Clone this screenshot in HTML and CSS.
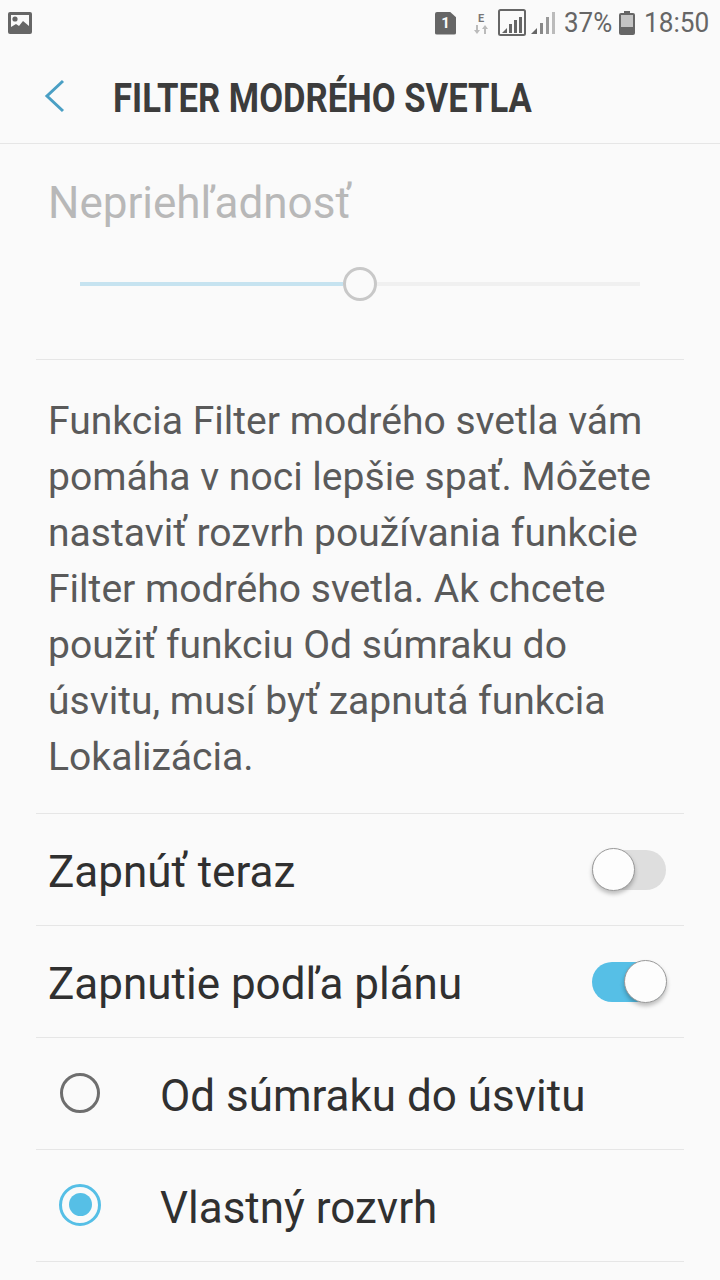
FILE: index.html
```html
<!DOCTYPE html>
<html lang="sk">
<head>
<meta charset="utf-8">
<title>Filter modrého svetla</title>
<link rel="stylesheet" href="styles.css">
</head>
<body>
<div class="status">
  <svg class="ic-pic" width="24" height="22" viewBox="0 0 24 22"><rect x="0" y="0" width="24" height="22" rx="2" fill="#666"/><rect x="3" y="3" width="18" height="13" fill="#fafafa"/><circle cx="7" cy="7" r="2.6" fill="#666"/><path d="M3 17 L3 15 L8 12 L11 14 L15 9 L21 14 L21 17 Z" fill="#666"/></svg>
  <div class="status-right">
    <div class="sim">1</div>
    <div class="edge"><span class="edge-e">E</span><svg width="14" height="9" viewBox="0 0 14 9"><path d="M3 9 L0 5 L2 5 L2 0 L4 0 L4 5 L6 5 Z M11 0 L14 4 L12 4 L12 9 L10 9 L10 4 L8 4 Z" fill="#bbb"/></svg></div>
    <svg class="sig1" width="28" height="28" viewBox="0 0 28 28"><rect x="1" y="1" width="26" height="25" rx="1.5" fill="none" stroke="#666" stroke-width="2"/><path d="M4 24 L9 24 L9 19 Z" fill="#666"/><rect x="11" y="15" width="3" height="9" fill="#666"/><rect x="16" y="11" width="3" height="13" fill="#666"/><rect x="21" y="8" width="3" height="16" fill="#666"/></svg>
    <svg class="sig2" width="24" height="26" viewBox="0 0 24 26"><path d="M0 24 L6 24 L6 18 Z" fill="#666"/><rect x="9" y="13" width="3" height="11" fill="#888"/><rect x="15" y="7" width="3" height="17" fill="#999"/><rect x="21" y="2" width="3" height="22" fill="#bbb"/></svg>
    <span class="pct">37%</span>
    <svg class="batt" width="16" height="24" viewBox="0 0 16 24"><rect x="5" y="0" width="6" height="3" fill="#666"/><rect x="0" y="2" width="16" height="22" rx="2" fill="#666"/><rect x="2" y="4" width="12" height="12" fill="#c4c4c4"/></svg>
    <span class="time">18:50</span>
  </div>
</div>
<header class="appbar">
  <svg class="back" width="22" height="34" viewBox="0 0 22 34"><path d="M19 2 L3 17 L19 32" fill="none" stroke="#4a9fc4" stroke-width="3"/></svg>
  <h1 class="title">FILTER MODRÉHO SVETLA</h1>
</header>
<main class="content">
  <section class="opacity">
    <div class="opacity-label">Nepriehľadnosť</div>
    <div class="slider">
      <div class="track-on"></div>
      <div class="thumb"></div>
      <div class="track-off"></div>
    </div>
  </section>
  <p class="desc">Funkcia Filter modrého svetla vám pomáha v noci lepšie spať. Môžete nastaviť rozvrh používania funkcie Filter modrého svetla. Ak chcete použiť funkciu Od súmraku do úsvitu, musí byť zapnutá funkcia Lokalizácia.</p>
  <div class="row"><span class="row-text">Zapnúť teraz</span><div class="switch"><div class="knob"></div></div></div>
  <div class="row"><span class="row-text">Zapnutie podľa plánu</span><div class="switch on"><div class="knob"></div></div></div>
  <div class="row radio-row"><div class="radio"></div><span class="row-text">Od súmraku do úsvitu</span></div>
  <div class="row radio-row"><div class="radio on"><div class="dot"></div></div><span class="row-text">Vlastný rozvrh</span></div>
</main>
</body>
</html>
```
FILE: styles.css
```css
* { box-sizing: border-box; }
html, body { margin: 0; padding: 0; }
body {
  width: 720px;
  height: 1280px;
  overflow: hidden;
  background: #fafafa;
  font-family: Roboto, "Noto Sans", sans-serif;
  color: #3c3c3c;
}
.status {
  height: 48px;
  display: flex;
  align-items: flex-start;
  justify-content: space-between;
  padding: 12px 12px 0 8px;
  color: #666;
}
.status-right { display: flex; align-items: center; height: 28px; margin-top: -3px; }
.sim {
  width: 21px; height: 23px;
  background: #666; color: #fafafa;
  border-radius: 2px;
  clip-path: polygon(0 0, 70% 0, 100% 25%, 100% 100%, 0 100%);
  font-size: 15px; font-weight: 700;
  display: flex; align-items: center; justify-content: center;
}
.edge { width: 14px; margin-left: 18px; display: flex; flex-direction: column; align-items: center; }
.edge-e { font-size: 11px; font-weight: 700; line-height: 13px; color: #777; }
.sig1 { margin-left: 10px; }
.sig2 { margin-left: 5px; }
.pct { font-size: 28.5px; line-height: 28px; margin-left: 9px; width: 48px; white-space: nowrap; transform: scaleX(0.91); transform-origin: left center; }
.batt { margin-left: 7px; }
.time { font-size: 28.5px; line-height: 28px; margin-left: 9px; width: 64px; white-space: nowrap; transform: scaleX(0.92); transform-origin: left center; }
.appbar {
  height: 96px;
  display: flex;
  align-items: center;
  border-bottom: 1px solid #e6e6e6;
  padding: 0 0 3px 44px;
}
.back { flex: none; margin-top: 3px; }
.title {
  margin: 8px 0 0 47px;
  font-size: 41px;
  font-weight: 700;
  color: #3c3c3c;
  transform: scaleX(0.845);
  transform-origin: left center;
  white-space: nowrap;
}
.content { padding: 0 36px; }
.opacity { height: 216px; border-bottom: 1px solid #e6e6e6; padding: 36px 12px 0; }
.opacity-label { font-size: 44px; line-height: 46px; color: #b8b8b8; }
.slider { display: flex; align-items: center; height: 34px; margin: 41px 32px 0; }
.track-on { width: 263px; height: 4px; background: #c6e3f0; }
.thumb { width: 34px; height: 34px; border-radius: 50%; border: 3px solid #c8c8c8; background: #fafafa; flex: none; }
.track-off { flex: 1; height: 4px; background: #f0f0f0; }
.desc {
  margin: 0;
  height: 454px;
  padding: 33px 12px 0;
  font-size: 39.1px;
  line-height: 56px;
  color: #5a5a5a;
  border-bottom: 1px solid #e6e6e6;
}
.row {
  height: 112px;
  display: flex;
  align-items: center;
  justify-content: space-between;
  padding: 4px 18px 0 12px;
  border-bottom: 1px solid #e6e6e6;
}
.row-text { font-size: 44px; line-height: 52px; color: #303030; white-space: nowrap; }
.switch { position: relative; width: 74px; height: 40px; border-radius: 20px; background: #dedede; margin-top: -4px; }
.switch.on { background: #56bfe6; }
.knob {
  position: absolute; left: 0; top: -2px;
  width: 43px; height: 43px; border-radius: 50%;
  background: #fdfdfd; border: 1px solid #999;
  box-shadow: 0 3px 4px rgba(0,0,0,0.25);
}
.switch.on .knob { left: 32px; }
.radio-row { justify-content: flex-start; padding-left: 24px; }
.radio-row .row-text { margin-left: 60px; }
.radio {
  width: 40px; height: 40px; border-radius: 50%;
  border: 3px solid #6e6e6e;
  margin-top: -6px;
  display: flex; align-items: center; justify-content: center;
}
.radio.on { width: 42px; height: 42px; margin: -6px -1px 0; border-color: #56bfe6; }
.dot { width: 23px; height: 23px; border-radius: 50%; background: #56bfe6; }
```
